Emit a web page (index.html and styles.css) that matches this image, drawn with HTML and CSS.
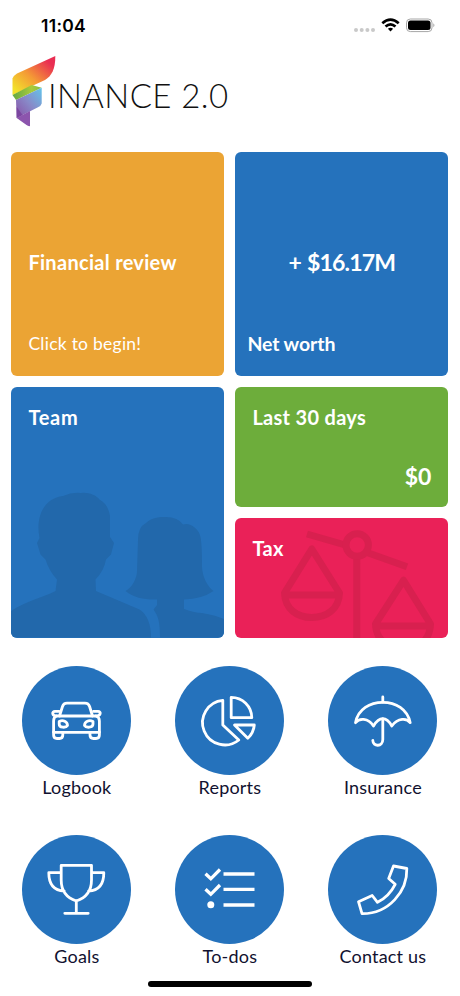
FILE: index.html
```html
<!DOCTYPE html>
<html lang="en">
<head>
<meta charset="utf-8">
<title>Finance 2.0</title>
<link rel="stylesheet" href="styles.css">
</head>
<body>
<header class="status">
  <span class="time">11:04</span>
  <svg class="signals" width="84" height="20" viewBox="0 0 84 20">
    <g fill="#c9c9c9"><circle cx="3" cy="15" r="2"/><circle cx="8.7" cy="15" r="2"/><circle cx="14.4" cy="15" r="2"/><circle cx="20" cy="15" r="2"/></g>
    <g fill="none" stroke="#000" stroke-width="2.7"><path d="M29.3 8.2Q37.5 1 45.7 8.2"/><path d="M32.5 11.6Q37.5 7.2 42.5 11.6"/></g>
    <path d="M34.9 13.7Q37.5 11.6 40.1 13.7L37.5 16.6Z"/>
    <rect x="53.5" y="4" width="25.5" height="12.6" rx="3.8" fill="none" stroke="#a6a6a6"/>
    <rect x="55" y="5.5" width="22.5" height="9.6" rx="2.5"/>
    <path d="M80.3 8.2Q82.6 10.2 80.3 12.3Z" fill="#a6a6a6"/>
  </svg>
</header>
<div class="brand">
  <svg width="46" height="73" viewBox="0 0 46 73">
    <defs>
      <linearGradient id="warm" x1="0" y1="1" x2="1" y2="0"><stop offset=".1" stop-color="#f2e02c"/><stop offset=".45" stop-color="#f49a35"/><stop offset=".85" stop-color="#e92d52"/></linearGradient>
      <linearGradient id="leaf"><stop stop-color="#63a744"/><stop offset=".65" stop-color="#a8cb3b"/><stop offset="1" stop-color="#84bd4b"/></linearGradient>
      <linearGradient id="sky" x1="0" y1="1" x2="1" y2="0"><stop stop-color="#8950a5"/><stop offset=".5" stop-color="#8889c8"/><stop offset="1" stop-color="#62c5eb"/></linearGradient>
    </defs>
    <path d="M44.3 1C44.5 14 40.5 21 34 25L1.5 40V23.5Q2 21 6 18.5Z" fill="url(#warm)"/>
    <path d="M1.5 40L20.7 30L30.7 32.7L5 45Z" fill="url(#leaf)"/>
    <path d="M5 45L30.7 32.7V48.5Q30 51 27 52.3L5.7 63Z" fill="url(#sky)"/>
    <path d="M5.7 63L19 56V71Q17.5 71.5 15.5 70Z" fill="#8c55ad"/>
    <path d="M5.7 52V63L11.5 60Z" fill="#7b46a0"/>
  </svg>
  <span class="wordmark">INANCE 2.0</span>
</div>
<main class="tiles">
  <section class="tile orange review"><h2>Financial review</h2><p>Click to begin!</p></section>
  <section class="tile blue worth"><strong>+ $16.17M</strong><h2>Net worth</h2></section>
  <section class="tile blue team">
    <svg class="art" viewBox="0 0 213 250.5" fill="#2268ab">
      <path d="M0 224C17 213 31 211 44.5 204L46 192.5Q38 184 34.5 172.5L29.5 167.5L26 156L28.5 151C27 143 27 136 29 129C32 118 41 110 52 109Q61 105 70 106C77 105 85 108 88.5 112.5Q97 117 99 129V150L103 156L100 167.5L95 172.5Q93 184 84.5 192.5L85 204L128.5 222.5Q140 230 140 250.5H0Z"/>
      <path d="M149 250.5C149 234 147 229 142.5 222.5L146 218V212.5C135 213 123 211 114.5 204C121 201 126 191 126 184L127 152.5Q127 140 135 136C141 130 150 130 155 130Q167 130 172 137.5C179 135 187 142 188.5 147Q191 151 191 179C191 190 197 200 202.5 204Q191 212 173 212.5V222Q184 226 191 226Q204 228 213 232V250.5Z"/>
    </svg>
    <h2>Team</h2>
  </section>
  <div class="stack">
    <section class="tile green days"><h2>Last 30 days</h2><strong>$0</strong></section>
    <section class="tile pink tax">
      <svg class="art" viewBox="0 0 213 120" fill="none" stroke="#d8204f" stroke-width="7">
        <path d="M72 16L112 27.5M132 34.5L172 48.7M121.8 38V121"/><circle cx="122.2" cy="27" r="11.2"/>
        <path stroke-linejoin="round" d="M76.8 31L49.5 75C50 91 62 99.5 76.8 99.5S104 91 104.5 75Z M50 77H104"/>
        <path stroke-linejoin="round" d="M168.5 62.3L140.5 106C141 122 153 131 168.5 131S195 122 195.5 106Z M141 108H195"/>
      </svg>
      <h2>Tax</h2>
    </section>
  </div>
</main>
<nav class="actions">
  <a class="action"><svg viewBox="0 0 109 109"><g class="line">
    <path d="M37.5 50L40.5 40.5Q41.5 37.2 45 37.2H63Q66.5 37.2 67.6 40.5L70.5 50"/>
    <path d="M37 45.3H33C29.5 45.3 30 50 34.5 50H74C79 50 79.5 45.3 76 45.3H71.5"/>
    <path d="M34.5 50Q31.6 51 31.6 55V66.3H77.4V55Q77.4 51 74 50"/>
    <path d="M31.6 66V69Q31.6 72.5 35 72.5H37.5Q40.8 72.5 40.8 69V66.5M68 66.5V69Q68 72.5 71.5 72.5H74Q77.4 72.5 77.4 69V66"/>
    <path d="M37.2 55.5C41 53.5 45.5 55.5 45.5 59.5C44 62 37 62 37.2 58ZM71 55.5C67 53.5 62.5 55.5 62.5 59.5C64 62 71 62 71 58Z"/>
  </g></svg><span>Logbook</span></a>
  <a class="action"><svg viewBox="0 0 109 109"><g class="line">
    <path d="M47.8 34.4V59L63.8 74A22.3 22.3 0 1 1 47.8 34.4Z"/>
    <path d="M56.2 31.3V51.7H76.8A20.6 20.6 0 0 0 56.2 31.3Z"/><path d="M59.5 59H79.3Q78.5 67 72.8 72.3Z"/>
  </g></svg><span>Reports</span></a>
  <a class="action"><svg viewBox="0 0 109 109"><g class="line">
    <path d="M54.8 31V36M54.8 53V73.5C54.8 81 45 81 44.8 74.5"/>
    <path d="M27.5 56.7C30 43 42 36.3 54.8 36.3S79.5 43 82.2 56.7C79 52 70 51.5 63.8 60C61 55 58 52.7 54.8 52.7S48.5 55 45.5 60C40 51.5 31 52 27.5 56.7Z"/>
  </g></svg><span>Insurance</span></a>
  <a class="action"><svg viewBox="0 0 109 109"><g class="line">
    <path d="M39.2 30.3H69.5V45Q69.5 61 54.3 66Q39.2 61 39.2 45ZM39.2 37.7H26.8C26.8 49 32 55.5 42.2 56M69.5 37.7H81.8C81.8 49 77 55.5 66.6 56M54.3 66V78.3M42.8 78.3H66.2"/>
  </g></svg><span>Goals</span></a>
  <a class="action"><svg viewBox="0 0 109 109"><g class="line todo">
    <path d="M30.5 38.8L35.8 43.8L45 34.5M30.5 54.3L35.8 59.3L45 50M48.5 39H79.5M48.5 54.4H79.5M48.5 70H79.5"/></g><circle cx="35.8" cy="69.7" r="3.5" fill="#fff"/>
  </svg><span>To-dos</span></a>
  <a class="action"><svg viewBox="0 0 109 109"><g class="line">
    <path d="M65.5 31L78.8 33.5C79.5 56 61 79 34 78.7L30.5 66.7L44.2 60.5L49.5 67.3Q61 61.5 67.2 49.3L60.7 43.5Z"/>
  </g></svg><span>Contact us</span></a>
</nav>
<div class="home"></div>
</body>
</html>
```
FILE: styles.css
```css
* { box-sizing: border-box; margin: 0; }
body { width: 460px; height: 996px; overflow: hidden; background: #fff; font-family: Lato, sans-serif; color: #11112f; display: flex; flex-direction: column; }
body > * { flex: none; }
.status { height: 55px; padding: 15px 23px 0 41px; display: flex; justify-content: space-between; align-items: flex-start; color: #000; }
.time { font: 600 17.5px/22px Inter, sans-serif; letter-spacing: .3px; }
.brand { height: 97.4px; padding-left: 11px; display: flex; }
.wordmark { margin-left: -9px; line-height: 81px; font-size: 33px; font-weight: 300; letter-spacing: .4px; color: #111; white-space: nowrap; }
.tiles { display: grid; grid-template-columns: 213px 213px; grid-template-rows: 224px 250.5px; gap: 11px; padding-left: 11.4px; color: #fff; }
.tile { position: relative; overflow: hidden; border-radius: 6px; display: flex; flex-direction: column; padding: 17px; }
.tile h2 { position: relative; font-size: 20px; line-height: 26px; font-weight: 700; letter-spacing: .3px; }
.tile p { font-size: 17.5px; line-height: 24px; letter-spacing: .25px; }
.tile strong { font-size: 23px; line-height: 30px; font-weight: 700; }
.orange { background: #eba434; }
.blue { background: #2572bc; }
.green { background: #6dad3b; }
.pink { background: #ea2158; }
.review { padding-top: 97px; justify-content: space-between; padding-bottom: 20px; }
.worth { padding: 95px 12px 19px; justify-content: space-between; }
.worth strong { text-align: center; letter-spacing: -.8px; word-spacing: 1px; }
.worth h2 { font-size: 19.5px; letter-spacing: -.1px; }
.team h2 { letter-spacing: .7px; }
.stack { display: grid; grid-template-rows: 120px 120px; gap: 10.5px; }
.days { justify-content: space-between; padding-bottom: 16px; }
.days strong { text-align: right; }
.art { position: absolute; inset: 0; width: 100%; height: 100%; }
.actions { display: grid; grid-template-columns: repeat(3, 109px); column-gap: 44px; grid-auto-rows: 169px; padding: 28px 0 0 22.4px; }
.action { display: flex; flex-direction: column; align-items: center; font-size: 18px; line-height: 25px; letter-spacing: .2px; white-space: nowrap; }
.action svg { width: 109px; height: 109px; flex: none; border-radius: 50%; background: #2572bc; }
.line { fill: none; stroke: #fff; stroke-width: 2.8; stroke-linejoin: round; stroke-linecap: round; }
.todo { stroke-linecap: butt; stroke-linejoin: miter; stroke-width: 3.3; }
.home { position: absolute; left: 148px; top: 981px; width: 164px; height: 5.5px; border-radius: 3px; background: #000; }
```
